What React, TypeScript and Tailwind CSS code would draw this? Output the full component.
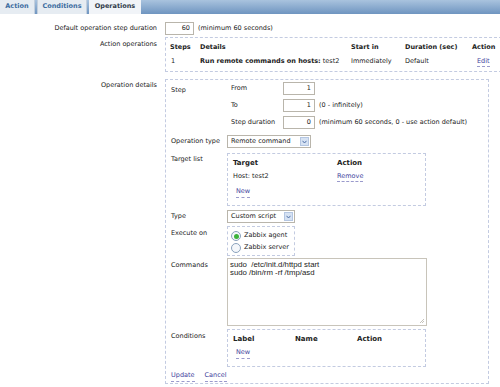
import React from "react";

const Lnk: React.FC<{ children: React.ReactNode }> = ({ children }) => (
  <span className="text-[#41419c] border-b border-dashed border-[#9a9acc] leading-[9px] pb-[1px] cursor-pointer">
    {children}
  </span>
);

const NumInput: React.FC<{ value: string; w?: string }> = ({ value, w = "w-[32px]" }) => (
  <div className={`${w} h-[13px] border border-[#b9b5ab] bg-white text-right pr-[3px] leading-[11px]`}>
    {value}
  </div>
);

const Select: React.FC<{ value: string; w: string }> = ({ value, w }) => (
  <div className={`${w} h-[13px] border border-[#b9b5ab] bg-white flex items-center justify-between pl-[3px] pr-[1px]`}>
    <span className="leading-[11px]">{value}</span>
    <span className="w-[9px] h-[9px] bg-[#d6e2f3] border border-[#b4c6e2] flex items-center justify-center">
      <svg width="5" height="4" viewBox="0 0 5 4">
        <path d="M0.5 0.8 L2.5 3 L4.5 0.8" stroke="#4d6fa8" strokeWidth="1" fill="none" />
      </svg>
    </span>
  </div>
);

const Radio: React.FC<{ checked?: boolean; label: string }> = ({ checked, label }) => (
  <div className="flex items-center gap-[3px] h-[12px]">
    <span className="w-[10px] h-[10px] rounded-full border border-[#8aa2bd] bg-[#f4f7fb] flex items-center justify-center">
      {checked && <span className="w-[5px] h-[5px] rounded-full bg-[#3cb33c]" />}
    </span>
    <span>{label}</span>
  </div>
);

export default function App() {
  return (
    <div className="w-[500px] h-[387px] bg-white overflow-hidden text-[6.5px] text-[#222] font-['DejaVu_Sans',sans-serif] relative">
      {/* tabs */}
      <div className="h-[14px] flex bg-gradient-to-b from-[#a9c3de] to-[#6f95c0]">
        <div className="w-[35px] bg-[#e6ecf2] border-r border-[#c3cfdd] text-[#3d6da0] font-bold flex items-center justify-center">
          Action
        </div>
        <div className="w-[2px]" />
        <div className="w-[50px] bg-[#e6ecf2] border-x border-[#c3cfdd] text-[#3d6da0] font-bold flex items-center justify-center">
          Conditions
        </div>
        <div className="w-[2px]" />
        <div className="w-[52px] bg-[#f1f4f8] text-[#303c4a] font-bold flex items-center justify-center">
          Operations
        </div>
      </div>

      <div className="grid grid-cols-[157px_1fr] gap-x-[8px] mt-[8px]">
        {/* default step duration */}
        <div className="text-right h-[13px] flex items-center justify-end">Default operation step duration</div>
        <div className="flex items-center gap-[4px] h-[13px]">
          <NumInput value="60" w="w-[29px]" />
          <span>(minimum 60 seconds)</span>
        </div>

        {/* action operations */}
        <div className="text-right pt-[3px] mt-[2px]">Action operations</div>
        <div className="mt-[2px] h-[35px] border border-dashed border-[#c3cbe1] border-r-0 pl-[4px] pt-[3px]">
          <div className="grid grid-cols-[30px_151px_54px_67px_40px] font-bold h-[13px] items-center">
            <span>Steps</span>
            <span>Details</span>
            <span>Start in</span>
            <span>Duration (sec)</span>
            <span>Action</span>
          </div>
          <div className="grid grid-cols-[30px_151px_54px_67px_40px] h-[16px] items-center">
            <span className="pl-[1px]">1</span>
            <span>
              <b>Run remote commands on hosts:</b> test2
            </span>
            <span>Immediately</span>
            <span>Default</span>
            <span className="pl-[5px]">
              <Lnk>Edit</Lnk>
            </span>
          </div>
        </div>

        {/* operation details */}
        <div className="text-right mt-[7px] pt-[2px]">Operation details</div>
        <div className="mt-[7px] w-[324px] h-[305px] border border-dashed border-[#c3cbe1] pl-[5px] pt-[2px]">
          <div className="grid grid-cols-[56px_1fr]">
            {/* step */}
            <div className="pt-[4px]">Step</div>
            <div className="flex flex-col gap-[4px] pl-[4px]">
              <div className="flex items-center h-[13px]">
                <span className="w-[52px]">From</span>
                <NumInput value="1" />
              </div>
              <div className="flex items-center h-[13px]">
                <span className="w-[52px]">To</span>
                <NumInput value="1" />
                <span className="ml-[4px]">(0 - infinitely)</span>
              </div>
              <div className="flex items-center h-[13px]">
                <span className="w-[52px]">Step duration</span>
                <NumInput value="0" />
                <span className="ml-[4px]">(minimum 60 seconds, 0 - use action default)</span>
              </div>
            </div>

            <div className="mt-[6px] h-[13px] flex items-center">Operation type</div>
            <div className="mt-[6px]">
              <Select value="Remote command" w="w-[84px]" />
            </div>

            <div className="mt-[5px] pt-[2px]">Target list</div>
            <div className="mt-[5px] w-[199px] h-[53px] border border-dashed border-[#c3cbe1] pl-[5px] pt-[4px]">
              <div className="grid grid-cols-[104px_1fr] font-bold h-[11px] items-center text-[7px]">
                <span>Target</span>
                <span>Action</span>
              </div>
              <div className="grid grid-cols-[104px_1fr] h-[16px] items-center">
                <span>Host: test2</span>
                <span>
                  <Lnk>Remove</Lnk>
                </span>
              </div>
              <div className="pl-[3px] h-[14px] flex items-center">
                <Lnk>New</Lnk>
              </div>
            </div>

            <div className="mt-[4px] h-[13px] flex items-center">Type</div>
            <div className="mt-[4px]">
              <Select value="Custom script" w="w-[68px]" />
            </div>

            <div className="mt-[3px] pt-[3px]">Execute on</div>
            <div className="mt-[3px] w-[68px] h-[30px] border border-dashed border-[#c3cbe1] pl-[3px] pt-[3px]">
              <Radio checked label="Zabbix agent" />
              <Radio label="Zabbix server" />
            </div>

            <div className="mt-[2px] pt-[3px]">Commands</div>
            <div className="mt-[2px] w-[200px] h-[68px] border border-[#c8c4ba] bg-white px-[2px] pt-[2px] font-['Liberation_Sans',sans-serif] text-[7.8px] leading-[8px] whitespace-pre relative">
              {"sudo  /etc/init.d/httpd start\nsudo /bin/rm -rf /tmp/asd"}
              <svg className="absolute right-[1px] bottom-[1px]" width="6" height="6" viewBox="0 0 6 6">
                <path d="M5 1 L1 5 M5 3 L3 5" stroke="#b8b4aa" strokeWidth="0.8" />
              </svg>
            </div>

            <div className="mt-[3px] pt-[3px]">Conditions</div>
            <div className="mt-[3px] w-[199px] h-[38px] border border-dashed border-[#c3cbe1] pl-[5px] pt-[4px]">
              <div className="grid grid-cols-[62px_62px_1fr] font-bold h-[11px] items-center text-[7px]">
                <span>Label</span>
                <span>Name</span>
                <span>Action</span>
              </div>
              <div className="pl-[3px] h-[16px] flex items-center">
                <Lnk>New</Lnk>
              </div>
            </div>
          </div>
          <div className="flex gap-[10px] mt-[3px] pl-[0px] h-[12px] items-center">
            <Lnk>Update</Lnk>
            <Lnk>Cancel</Lnk>
          </div>
        </div>
      </div>
    </div>
  );
}
